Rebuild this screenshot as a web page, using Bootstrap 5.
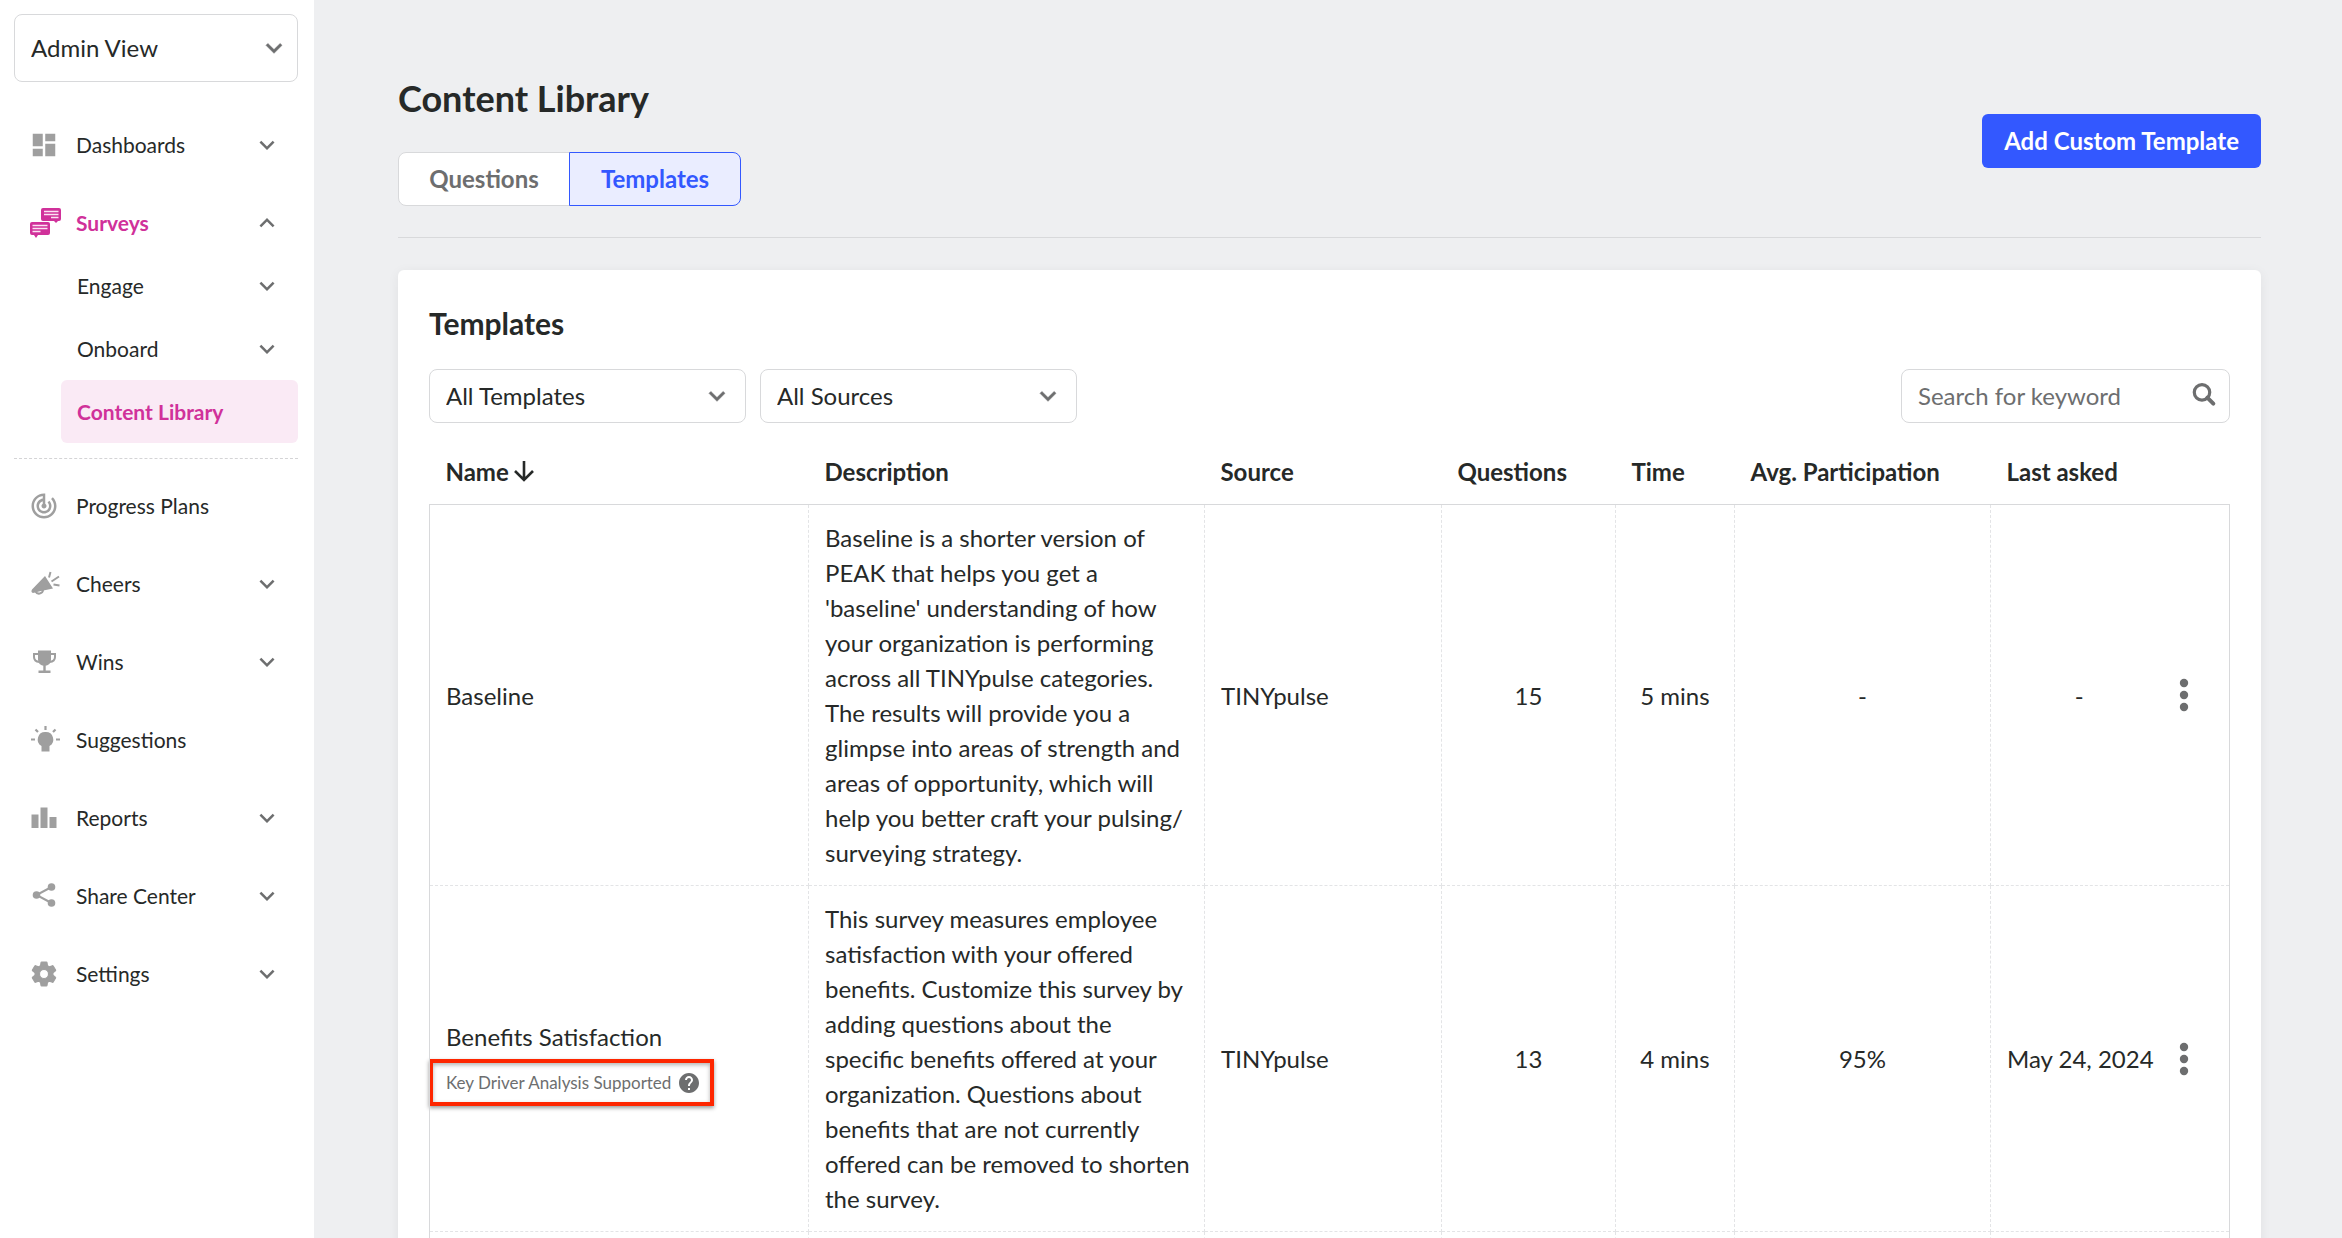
<!DOCTYPE html>
<html lang="en">
<head>
<meta charset="utf-8">
<meta name="viewport" content="width=device-width, initial-scale=1">
<title>Content Library</title>
<link href="https://cdn.jsdelivr.net/npm/bootstrap@5.3.0/dist/css/bootstrap.min.css" rel="stylesheet">
<style>
  :root { --ink:#262928; --muted:#6d6e6f; --line:#d8d9db; --pink:#d0319a; --blue:#3358ff; }
  body { font-family:Lato,"Liberation Sans",sans-serif; font-size:24px; line-height:35px; color:var(--ink); background:#eeeff1; }
  svg { display:block; flex:none; fill:currentColor; }

  .sidebar { width:314px; padding:14px 16px 0 14px; }
  .form-select, .form-control { font-size:24px; line-height:35px; color:var(--ink); border:1px solid var(--line); border-radius:8px; padding:7px 16px 9px;
    font-family:inherit; }
  .form-select { padding-right:48px; background-size:32px 32px; background-position:right 12px center;
    background-image:url("data:image/svg+xml,%3Csvg xmlns='http://www.w3.org/2000/svg' viewBox='0 0 24 24'%3E%3Cpath fill='%236d6e6f' stroke='%236d6e6f' stroke-width='.4' d='M16.59 8.59L12 13.17 7.41 8.59 6 10l6 6 6-6z'/%3E%3C/svg%3E"); }
  .view-select { height:68px; background-position:right 7px center; margin-bottom:31px; }
  .side-link { height:63px; padding:0 16px 0 15px; gap:17px; font-size:21px; color:var(--ink); text-decoration:none; border-radius:6px; margin-bottom:15px; }
  .side-link > svg:first-child { width:30px; height:30px; color:#9f9f9f; overflow:visible; }
  .side-link > svg.chev { width:30px; height:30px; color:var(--muted); margin-left:auto; }
  .side-link.open { color:var(--pink); font-weight:700; margin-bottom:0; }
  .side-link.open > svg:first-child { color:var(--pink); }
  .side-sub { margin:0 0 0 47px; padding:0 16px; }
  .side-sub.current { background:#faeaf5; color:var(--pink); font-weight:700; }
  .side-rule { border-top:1px dashed #d4d4d6; margin:15px 0; }

  .page { padding:72px 81px 0 84px; }
  .page-head { border-bottom:1px solid var(--line); padding-bottom:31px; margin-bottom:32px; }
  h1 { font-size:36px; line-height:52px; font-weight:700; margin-bottom:28px; }
  h2 { font-size:30px; line-height:42px; font-weight:700; margin-bottom:25px; }
  .tabs .btn { width:172px; height:54px; font-size:24px; line-height:35px; font-weight:700; padding:0 0 2px; border:1px solid var(--line); background:#fff; color:var(--muted); border-radius:8px; }
  .tabs .btn.active { background:#eaedff; border-color:var(--blue); color:var(--blue); }
  .btn-add { height:54px; padding:0 22px; font-size:24px; font-weight:700; color:#fff; background:var(--blue); border:0; border-radius:6px; margin-top:42px; }
  .panel { background:#fff; border-radius:6px; padding:32px 31px 0; box-shadow:0 2px 12px rgba(0,0,0,.06); }
  .filters { gap:14px; }
  .filter { width:317px; height:54px; }
  .search { width:329px; }
  .search .form-control { height:54px; padding-right:48px; }
  .search .form-control::placeholder { color:var(--muted); opacity:1; }
  .search svg { right:10px; top:10px; width:32px; height:32px; color:var(--muted); }

  .grid { table-layout:fixed; width:100%; margin-top:16px; }
  .grid th, .grid td { padding:15px 16px; vertical-align:middle; }
  .grid th { font-weight:700; white-space:nowrap; }
  .grid tbody { border:1px solid var(--line); }
  .grid td { border-right:1px dashed #e3e4e6; border-bottom:1px dashed #e3e4e6; }
  .grid td.about { padding-right:8px; }
  .grid td.plain { border-right:0; white-space:nowrap; }
  .grid td:last-child { border-right:1px solid var(--line); padding:0; }
  .kebab { display:block; width:34px; height:48px; padding:0; border:0; background:none; color:var(--muted); }
  .callout { width:max-content; height:47px; border:4px solid #fe2600; margin:5px 0 -8px -17px; padding:0 9px 0 13px; gap:6px; font-size:17px; color:var(--muted);
    box-shadow:0 2px 4px rgba(0,0,0,.4), inset 0 2px 4px rgba(0,0,0,.3); }
</style>
<script src="https://cdn.jsdelivr.net/npm/bootstrap@5.3.0/dist/js/bootstrap.bundle.min.js"></script>
</head>
<body>
<svg class="d-none" aria-hidden="true">
  <symbol id="down" viewBox="0 0 24 24"><path d="M16.59 8.59L12 13.17 7.41 8.59 6 10l6 6 6-6z"/></symbol>
  <symbol id="up" viewBox="0 0 24 24"><path d="M12 8l-6 6 1.41 1.41L12 10.83l4.59 4.58L18 14z"/></symbol>
  <symbol id="dots" viewBox="0 0 34 48"><circle cx="17" cy="12" r="4.2"/><circle cx="17" cy="24" r="4.2"/><circle cx="17" cy="36" r="4.2"/></symbol>
</svg>

<div class="d-flex vh-100 overflow-hidden">
  <nav class="sidebar bg-white flex-shrink-0" aria-label="Main">
    <select class="form-select view-select" aria-label="View"><option>Admin View</option></select>

    <a class="side-link d-flex align-items-center" href="#"><svg viewBox="0 0 24 24"><path d="M3 13h8V3H3v10zm0 8h8v-6H3v6zm10 0h8V11h-8v10zm0-18v6h8V3h-8z"/></svg>Dashboards<svg class="chev"><use href="#down"/></svg></a>
    <a class="side-link open d-flex align-items-center" href="#"><svg viewBox="-1 0 30 30"><path d="M13 0h16q2 0 2 2v9q0 2-2 2h-1l-2 2-2-2H13q-2 0-2-2V2q0-2 2-2z"/><path d="M2 14h16q2 0 2 2v9q0 2-2 2H8l-2 3-2-3H2q-2 0-2-2v-9q0-2 2-2z"/><path d="M14 3.500h14.500M14 6.500h14.500M21 9.500h7.500M2.500 17.500h15M2.500 20.500h15M2.500 23.500h8" fill="none" stroke="#fbe3f3" stroke-width="1.700"/></svg>Surveys<svg class="chev"><use href="#up"/></svg></a>
    <a class="side-link side-sub d-flex align-items-center" href="#">Engage<svg class="chev"><use href="#down"/></svg></a>
    <a class="side-link side-sub d-flex align-items-center" href="#">Onboard<svg class="chev"><use href="#down"/></svg></a>
    <a class="side-link side-sub current d-flex align-items-center" href="#" aria-current="page">Content Library</a>
    <div class="side-rule"></div>
    <a class="side-link d-flex align-items-center" href="#"><svg viewBox="0 0 24 24"><path d="M19.07 4.93l-1.41 1.41C19.1 7.79 20 9.79 20 12c0 4.42-3.58 8-8 8s-8-3.58-8-8c0-4.08 3.05-7.44 7-7.93v2.02C8.16 6.57 6 9.03 6 12c0 3.31 2.69 6 6 6s6-2.69 6-6c0-1.66-.67-3.16-1.76-4.24l-1.41 1.41C15.55 9.9 16 10.9 16 12c0 2.21-1.79 4-4 4s-4-1.79-4-4c0-1.86 1.28-3.41 3-3.86v2.14c-.6.35-1 .98-1 1.72 0 1.1.9 2 2 2s2-.9 2-2c0-.74-.4-1.38-1-1.72V2h-1C6.48 2 2 6.48 2 12s4.48 10 10 10 10-4.48 10-10c0-2.76-1.12-5.26-2.93-7.07z"/></svg>Progress Plans</a>
    <a class="side-link d-flex align-items-center" href="#"><svg viewBox="0 0 30 30"><path d="M16 7l8 12.500-12 2.500-8 2q-2.500-1-1-3.500z"/><path d="M6.500 22.500a4 4 0 0 0 7.500-1.500" fill="none" stroke="currentColor" stroke-width="2"/><path d="M20 8.500l1.500-5.500M22.500 12.500l7.500-5M24.500 15.500l6 1" fill="none" stroke="currentColor" stroke-width="2"/></svg>Cheers<svg class="chev"><use href="#down"/></svg></a>
    <a class="side-link d-flex align-items-center" href="#"><svg viewBox="0 0 30 30"><path d="M9 3.500h13v9q0 5.500-6.500 6.500Q9 18 9 12.500zM14.300 18h2.400v6.500h-2.400zM9.500 23.500h12v2.500h-12z"/><path d="M9.500 7H5v3q0 4.500 5.500 5M21.500 7H26v3q0 4.500-5.500 5" fill="none" stroke="currentColor" stroke-width="2"/></svg>Wins<svg class="chev"><use href="#down"/></svg></a>
    <a class="side-link d-flex align-items-center" href="#"><svg viewBox="0 0 30 30"><path d="M16.500 7a7.500 7.500 0 0 1 4 14V26.500h-8V21a7.500 7.500 0 0 1 4-14z"/><path d="M16.500 1v4M6.500 4.500l2.500 2.500M26.500 4.500L24 7M2 14.500h4M27 14.500h4" fill="none" stroke="currentColor" stroke-width="2.200"/></svg>Suggestions</a>
    <a class="side-link d-flex align-items-center" href="#"><svg viewBox="0 0 30 30"><path d="M2.500 11.500H9.500V25H2.500zM11.500 4.500h7V25h-7zM20.500 14h7v11h-7z"/></svg>Reports<svg class="chev"><use href="#down"/></svg></a>
    <a class="side-link d-flex align-items-center" href="#"><svg viewBox="0 0 30 30"><circle cx="7.500" cy="14" r="3.800"/><circle cx="22.500" cy="6" r="3.800"/><circle cx="22.500" cy="22" r="3.800"/><path d="M22.500 6l-15 8 15 8" fill="none" stroke="currentColor" stroke-width="2"/></svg>Share Center<svg class="chev"><use href="#down"/></svg></a>
    <a class="side-link d-flex align-items-center" href="#"><svg viewBox="0 0 24 24"><path stroke="currentColor" stroke-width=".9" d="M19.140 12.940c.04-.3.06-.61.06-.94 0-.32-.02-.64-.07-.94l2.030-1.580c.18-.14.23-.41.12-.61l-1.920-3.320c-.12-.22-.37-.29-.59-.22l-2.390.96c-.5-.38-1.030-.7-1.620-.94l-.36-2.540c-.04-.24-.24-.41-.48-.41h-3.840c-.24 0-.43.17-.47.41l-.36 2.540c-.59.24-1.130.57-1.620.94l-2.390-.96c-.22-.08-.47 0-.59.22L2.740 8.870c-.12.21-.08.47.12.61l2.030 1.580c-.05.3-.09.63-.09.94s.02.64.07.94l-2.030 1.580c-.18.14-.23.41-.12.61l1.920 3.320c.12.22.37.29.59.22l2.390-.96c.5.38 1.030.7 1.620.94l.36 2.540c.05.24.24.41.48.41h3.840c.24 0 .44-.17.47-.41l.36-2.540c.59-.24 1.130-.56 1.620-.94l2.390.96c.22.08.47 0 .59-.22l1.920-3.320c.12-.22.07-.47-.12-.61l-2.010-1.580zM12 15.600c-2 0-3.600-1.600-3.600-3.600s1.600-3.600 3.600-3.600 3.600 1.600 3.600 3.600-1.600 3.600-3.600 3.600z"/></svg>Settings<svg class="chev"><use href="#down"/></svg></a>
  </nav>

  <main class="page flex-grow-1">
    <header class="page-head d-flex justify-content-between align-items-start">
      <div>
        <h1>Content Library</h1>
        <div class="tabs btn-group" role="group" aria-label="Library section">
          <button type="button" class="btn">Questions</button>
          <button type="button" class="btn active" aria-pressed="true">Templates</button>
        </div>
      </div>
      <button type="button" class="btn btn-add">Add Custom Template</button>
    </header>

    <section class="panel">
      <h2>Templates</h2>
      <div class="filters d-flex align-items-center">
        <select class="form-select filter" aria-label="Template type"><option>All Templates</option></select>
        <select class="form-select filter" aria-label="Source"><option>All Sources</option></select>
        <div class="search position-relative ms-auto">
          <input class="form-control" type="search" placeholder="Search for keyword" aria-label="Search for keyword">
          <svg class="position-absolute" viewBox="0 0 24 24"><circle cx="10.500" cy="10" r="5.800" fill="none" stroke="currentColor" stroke-width="2.400"/><path d="M14.500 14l4.500 4.500" stroke="currentColor" stroke-width="3" stroke-linecap="round"/></svg>
        </div>
      </div>

      <table class="grid">
        <colgroup><col style="width:379px"><col><col style="width:237px"><col style="width:174px"><col style="width:119px"><col style="width:256px"><col style="width:177px"><col style="width:62px"></colgroup>
        <thead>
          <tr>
            <th scope="col"><span class="d-flex align-items-center gap-1">Name<svg width="22" height="26" viewBox="0 0 22 26"><path d="M11 2v19M2 12l9 9 9-9" fill="none" stroke="currentColor" stroke-width="2.600"/></svg></span></th>
            <th scope="col">Description</th><th scope="col">Source</th><th scope="col">Questions</th><th scope="col">Time</th><th scope="col">Avg. Participation</th><th scope="col" colspan="2">Last asked</th>
          </tr>
        </thead>
        <tbody>
          <tr>
            <td>Baseline</td>
            <td class="about">Baseline is a shorter version of PEAK that helps you get a 'baseline' understanding of how your organization is performing across all TINYpulse categories. The results will provide you a glimpse into areas of strength and areas of opportunity, which will help you better craft your pulsing/<wbr>surveying strategy.</td>
            <td>TINYpulse</td><td class="text-center">15</td><td class="text-center">5 mins</td><td class="text-center">-</td><td class="plain text-center">-</td>
            <td><button type="button" class="kebab" aria-label="Baseline actions"><svg width="34" height="48"><use href="#dots"/></svg></button></td>
          </tr>
          <tr>
            <td>Benefits Satisfaction
              <div class="callout d-flex align-items-center">Key Driver Analysis Supported<svg width="24" height="24" viewBox="0 0 24 24"><path d="M12 2C6.480 2 2 6.480 2 12s4.480 10 10 10 10-4.480 10-10S17.520 2 12 2zm1 17h-2v-2h2v2zm2.070-7.750l-.9.920C13.450 12.900 13 13.500 13 15h-2v-.5c0-1.100.45-2.100 1.170-2.830l1.240-1.260c.37-.36.59-.86.59-1.410 0-1.100-.9-2-2-2s-2 .9-2 2H8c0-2.210 1.790-4 4-4s4 1.790 4 4c0 .88-.36 1.680-.93 2.250z"/></svg></div>
            </td>
            <td class="about">This survey measures employee satisfaction with your offered benefits. Customize this survey by adding questions about the specific benefits offered at your organization. Questions about benefits that are not currently offered can be removed to shorten the survey.</td>
            <td>TINYpulse</td><td class="text-center">13</td><td class="text-center">4 mins</td><td class="text-center">95%</td><td class="plain text-center">May 24, 2024</td>
            <td><button type="button" class="kebab" aria-label="Benefits Satisfaction actions"><svg width="34" height="48"><use href="#dots"/></svg></button></td>
          </tr>
          <tr><td></td><td></td><td></td><td></td><td></td><td></td><td class="plain"></td><td></td></tr>
        </tbody>
      </table>
    </section>
  </main>
</div>
</body>
</html>
